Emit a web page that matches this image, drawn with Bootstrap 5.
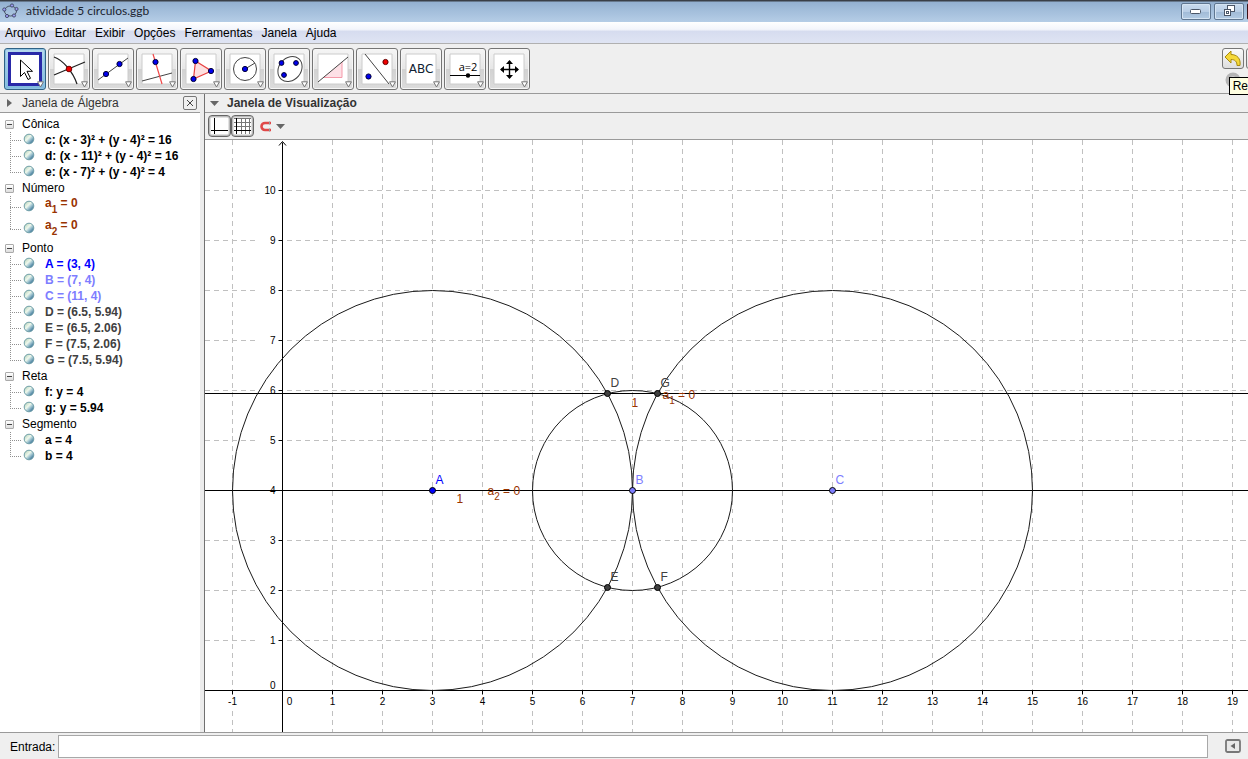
<!DOCTYPE html>
<html lang="pt-BR">
<head>
<meta charset="utf-8">
<meta name="viewport" content="width=device-width, initial-scale=1">
<title>atividade 5 circulos.ggb</title>
<link rel="stylesheet" href="https://cdn.jsdelivr.net/npm/bootstrap@5.3.0/dist/css/bootstrap.min.css">
<style>
  body { font: 12px/16px "Liberation Sans", Arial, sans-serif; color: #000; background: #efefef; }
  button { font: inherit; padding: 0; }
  .titlebar { height: 22px; padding: 0 0 0 2px; gap: 6px; background: linear-gradient(#3a3f47 0 1px, #93b0d0 2px, #a3bedb 50%, #b5cde6); }
  .title-text { font: 12px/20px Lato, "Open Sans", sans-serif; color: #1c2430; }
  .win-buttons { width: 67px; gap: 3px; }
  .win-btn { flex: 0 0 30px; height: 17px; border: 1px solid #5f7690; border-radius: 2px; background: linear-gradient(#c9dbee, #b9cee6 50%, #a0bad6 51%, #b3cbe4); box-shadow: inset 0 0 0 1px #d5e4f3; }
  .win-close { background: #6b2630; border-color: #3c1118; box-shadow: none; }
  .menus { height: 22px; gap: 9px; padding: 0 5px; background: linear-gradient(#fff, #f3f5fb 35%, #d6dcef 45%, #dfe4f3); border-bottom: 1px solid #b0b0b0; }
  .menus a { color: #000; text-decoration: none; line-height: 22px; }
  .tools { height: 50px; padding: 4px 0 0 4px; gap: 2px; border-bottom: 1px solid #9a9a9a; }
  .tool { flex: 0 0 42px; height: 42px; border: 1px solid #757575; border-radius: 3px; background: linear-gradient(#f5f5f5, #e6e6e6 50%, #d2d2d2 51%, #dcdcdc); box-shadow: inset 0 0 0 1px #f6f6f6; }
  .tool svg { display: block; margin: 0 auto; }
  .tool.active { border-color: #2f6286; background: linear-gradient(#b6d9ee, #7fb9de); box-shadow: inset 0 0 0 1px #8fc3e2; }
  .history { width: 26px; }
  .step-row { gap: 2px; }
  .step { flex: 0 0 22px; height: 21px; border: 1px solid #777; border-radius: 3px; background: linear-gradient(#fafafa, #dedede); }
  .step svg, .redo svg { display: block; }
  .redo { border: 0; background: none; margin: 3px 0 0 3px; }
  .tip { right: 0; top: 33px; height: 18px; padding: 0 0 0 3px; background: #ffffe1; border: 1px solid #000; border-right: 0; white-space: nowrap; font-size: 12px; }
  .algebra { flex: 0 0 205px; background: #fff; border-right: 1px solid #707070; }
  .algebra-main { background: #fff; }
  .splitter { width: 4px; background: #ececec; }
  .panel-head { height: 19px; border-bottom: 1px solid #9a9a9a; background: #efefef; color: #333; line-height: 18px; }
  .fold { border: 0; background: none; line-height: 0; width: 22px; padding-right: 3px; text-align: center; }
  .closer { width: 14px; height: 14px; border: 1px solid #777; border-radius: 2px; background: #f0f0f0; line-height: 0; margin-right: 3px; }
  .tree { padding-top: 3px; }
  .tree ul { list-style: none; margin: 0; padding: 0; }
  .branch { height: 16px; padding-left: 5px; gap: 8px; }
  .twist { width: 9px; height: 9px; border: 1px solid #aaa; border-radius: 1px; background: linear-gradient(#fff, #ddd); line-height: 0; }
  .leaf { height: 16px; padding-left: 23px; gap: 10px; font-weight: bold; white-space: nowrap;
    background: repeating-linear-gradient(#909090 0 1px, transparent 1px 2px) 10px 0 / 1px 100% no-repeat, repeating-linear-gradient(90deg, #909090 0 1px, transparent 1px 2px) 10px 50% / 11px 1px no-repeat; }
  .leaf svg { margin-bottom: 2px; }
  .leaf:last-child { background-size: 1px 50%, 11px 1px; }
  .leaf.tall { height: 22px; }
  .leaf.tall span { margin-top: -8px; }
  .leaf sub { font-size: 10px; bottom: -6px; }
  .rust { color: #993300; } .free { color: #0000ff; } .onpath { color: #7d7dff; } .derived { color: #404040; }
  .view-tools { height: 27px; padding: 0 3px; border-bottom: 1px solid #9a9a9a; }
  .toggle { width: 23px; height: 22px; border: 1px solid #666; border-radius: 4px; background: #e2e2e2; box-shadow: inset 0 0 0 1px #bbb; line-height: 0; }
  .magnet { border: 0; background: none; line-height: 0; margin-left: 5px; }
  .board { background: #fff; min-height: 0; overflow: hidden; }
  .board svg { display: block; }
  .board text { font: 12px "Liberation Sans", Arial, sans-serif; }
  .board .num text { font-size: 10px; }
  .board .subscript { font-size: 10px; }
  .entry { height: 27px; padding: 2px 7px 1px 10px; gap: 3px; border-top: 1px solid #9a9a9a; }
  .entry input { height: 23px; border: 1px solid #a8a8a8; background: #fff; padding: 0 4px; margin-right: 14px; min-width: 0; }
  .entry button { border: 0; background: none; line-height: 0; }
</style>
</head>
<body class="d-flex flex-column vh-100 overflow-hidden">
<svg width="0" height="0" class="position-absolute" aria-hidden="true">
  <defs>
    <linearGradient id="ball" x1="0.1" y1="0.1" x2="0.9" y2="0.9"><stop offset="0" stop-color="#b4d2bc"/><stop offset="0.4" stop-color="#f0f8ec"/><stop offset="0.6" stop-color="#a9cbd4"/><stop offset="1" stop-color="#27648e"/></linearGradient>
    <symbol id="marble" viewBox="0 0 12 12"><circle cx="6" cy="6" r="4.800" fill="url(#ball)" stroke="#6f9fa8"/></symbol>
    <symbol id="minus" viewBox="0 0 7 7"><path d="M1 3.500h5" stroke="#444"/></symbol>
    <symbol id="more" viewBox="0 0 7 7"><path d="M.6.8h5.8L3.5 6z" fill="#fff" stroke="#777"/></symbol>
  </defs>
</svg>

<header class="titlebar d-flex align-items-center flex-shrink-0">
  <svg width="18" height="18" viewBox="0 0 18 18"><ellipse cx="8.500" cy="9" rx="6" ry="5" fill="none" stroke="#4b5363"/><g fill="#9c9cf0" stroke="#333a55" stroke-width=".8"><circle cx="10" cy="3.500" r="1.600"/><circle cx="14.500" cy="7" r="1.600"/><circle cx="12" cy="13.500" r="1.600"/><circle cx="5" cy="14" r="1.600"/><circle cx="2.300" cy="7.500" r="1.600"/></g></svg>
  <span class="title-text flex-grow-1">atividade 5 circulos.ggb</span>
  <div class="win-buttons d-flex overflow-hidden">
    <button class="win-btn" aria-label="Minimizar"><svg class="d-block mx-auto" width="12" height="7"><rect x=".5" y="1.500" width="10" height="4" rx="1" fill="#fff" stroke="#4b5668"/></svg></button>
    <button class="win-btn" aria-label="Restaurar"><svg class="d-block mx-auto" width="13" height="12"><g fill="#fff" stroke="#4b5668"><rect x="4.500" y=".5" width="7" height="6"/><rect x="1.500" y="4.500" width="6" height="6"/><rect x="3.500" y="6.500" width="2" height="2"/></g></svg></button>
    <button class="win-btn win-close" aria-label="Fechar"></button>
  </div>
</header>

<nav class="menus d-flex flex-shrink-0">
  <a href="#">Arquivo</a><a href="#">Editar</a><a href="#">Exibir</a><a href="#">Opções</a><a href="#">Ferramentas</a><a href="#">Janela</a><a href="#">Ajuda</a>
</nav>

<div class="tools d-flex flex-shrink-0 position-relative">
  <button class="tool active" aria-label="Mover"><svg width="40" height="40"><rect x="4.500" y="4.500" width="31" height="31" fill="#fff" stroke="#2929a8" stroke-width="3"/><path d="M15.500 11v16.500l4-4 3.500 7 2.500-1.200-3.500-7h5.500z" fill="#fff" stroke="#000"/><use href="#more" x="32" y="32" width="7" height="7"/></svg></button>
  <button class="tool" aria-label="Ponto"><svg width="40" height="40"><path d="M5 5h30v30H5z" fill="#fff" stroke="#ccc"/><path d="M5 8c9 3 19 15 23 27M5 26l31-13" fill="none" stroke="#222" stroke-width="1.300"/><circle cx="20" cy="20" r="2.800" fill="#e00" stroke="#700"/><use href="#more" x="32" y="32" width="7" height="7"/></svg></button>
  <button class="tool" aria-label="Reta"><svg width="40" height="40"><path d="M5 5h30v30H5z" fill="#fff" stroke="#ccc"/><path d="M5 31L35 9" stroke="#444"/><g fill="#00e" stroke="#003"><circle cx="13" cy="25" r="2.600"/><circle cx="26.500" cy="15" r="2.600"/></g><use href="#more" x="32" y="32" width="7" height="7"/></svg></button>
  <button class="tool" aria-label="Reta perpendicular"><svg width="40" height="40"><path d="M5 5h30v30H5z" fill="#fff" stroke="#ccc"/><path d="M5 32l30-8" stroke="#444"/><path d="M16 5l9 30" stroke="#f04848" stroke-width="1.200"/><circle cx="18.500" cy="13" r="2.600" fill="#00e" stroke="#003"/><use href="#more" x="32" y="32" width="7" height="7"/></svg></button>
  <button class="tool" aria-label="Polígono"><svg width="40" height="40"><path d="M5 5h30v30H5z" fill="#fff" stroke="#ccc"/><path d="M14.500 12l16 10-18 8z" fill="#fde0e0" stroke="#e84040" stroke-width="1.200"/><g fill="#00e" stroke="#003"><circle cx="14.500" cy="12" r="2.600"/><circle cx="30" cy="22" r="2.600"/><circle cx="12.500" cy="30" r="2.600"/></g><use href="#more" x="32" y="32" width="7" height="7"/></svg></button>
  <button class="tool" aria-label="Círculo"><svg width="40" height="40"><path d="M5 5h30v30H5z" fill="#fff" stroke="#ccc"/><circle cx="20" cy="20" r="11.500" fill="none" stroke="#444"/><path d="M20 20l10-6" stroke="#444"/><circle cx="20" cy="20" r="2.600" fill="#00e" stroke="#003"/><use href="#more" x="32" y="32" width="7" height="7"/></svg></button>
  <button class="tool" aria-label="Cônica"><svg width="40" height="40"><path d="M5 5h30v30H5z" fill="#fff" stroke="#ccc"/><ellipse cx="21" cy="20" rx="13.500" ry="11" transform="rotate(-50 21 20)" fill="none" stroke="#444"/><g fill="#00e" stroke="#003"><circle cx="12.500" cy="14" r="2.400"/><circle cx="27" cy="14" r="2.400"/><circle cx="15" cy="26" r="2.400"/></g><use href="#more" x="32" y="32" width="7" height="7"/></svg></button>
  <button class="tool" aria-label="Ângulo"><svg width="40" height="40"><path d="M5 5h30v30H5z" fill="#fff" stroke="#ccc"/><path d="M10 28.500h19V13" fill="#fde0e6" stroke="#f59aaa"/><path d="M5 33L35 8" stroke="#444"/><use href="#more" x="32" y="32" width="7" height="7"/></svg></button>
  <button class="tool" aria-label="Reflexão"><svg width="40" height="40"><path d="M5 5h30v30H5z" fill="#fff" stroke="#ccc"/><path d="M8 5l24 30" stroke="#444"/><circle cx="28.500" cy="13" r="2.600" fill="#e00" stroke="#600"/><circle cx="11.500" cy="27.500" r="2.600" fill="#00e" stroke="#003"/><use href="#more" x="32" y="32" width="7" height="7"/></svg></button>
  <button class="tool" aria-label="Texto"><svg width="40" height="40"><path d="M5 5h30v30H5z" fill="#fff" stroke="#ccc"/><text x="20" y="24" text-anchor="middle" font-family="DejaVu Sans, sans-serif" font-size="12" fill="#123">ABC</text><use href="#more" x="32" y="32" width="7" height="7"/></svg></button>
  <button class="tool" aria-label="Controle deslizante"><svg width="40" height="40"><path d="M5 5h30v30H5z" fill="#fff" stroke="#ccc"/><text x="23" y="22" text-anchor="middle" font-family="Open Sans, sans-serif" font-size="11" fill="#000">a=2</text><path d="M5 26.500h30" stroke="#000"/><circle cx="23" cy="26.500" r="2.200"/><use href="#more" x="32" y="32" width="7" height="7"/></svg></button>
  <button class="tool" aria-label="Mover janela"><svg width="40" height="40"><path d="M5 5h30v30H5z" fill="#fff" stroke="#ccc"/><path d="M12 20.500h17M20.500 12v17" stroke="#000" stroke-width="1.400"/><path d="M20.500 11l3.500 4h-7zM20.500 30l3.500-4h-7zM11 20.500l4-3.500v7zM30 20.500l-4-3.500v7z"/><use href="#more" x="32" y="32" width="7" height="7"/></svg></button>
  <div class="history ms-auto overflow-hidden">
    <div class="step-row d-flex">
      <button class="step" aria-label="Desfazer"><svg width="20" height="19"><path d="M2 8l6-6v3.500c6 0 10 4 9 11h-3c0-4-2-6-6-6V14z" fill="#f5d838" stroke="#a88a10"/></svg></button>
      <button class="step" aria-label="Opções do histórico"></button>
    </div>
    <button class="redo" aria-label="Refazer"><svg width="16" height="17"><circle cx="8" cy="8" r="7.500" fill="#b5b5b5"/><circle cx="8" cy="8" r="3.500" fill="#e8e8e8"/></svg></button>
  </div>
  <div class="tip position-absolute" role="tooltip">Re</div>
</div>

<main class="d-flex flex-grow-1" style="min-height:0">
  <aside class="algebra d-flex">
    <div class="algebra-main flex-grow-1">
      <div class="panel-head d-flex align-items-center">
        <button class="fold" aria-label="Expandir"><svg width="5" height="8"><path d="M0 0l5 4-5 4z" fill="#666"/></svg></button>
        <span class="flex-grow-1">Janela de Álgebra</span>
        <button class="closer" aria-label="Fechar"><svg width="8" height="8"><path d="M1 1l6 6M7 1L1 7" stroke="#444"/></svg></button>
      </div>
      <div class="tree">
        <div class="branch d-flex align-items-center"><button class="twist" aria-label="Recolher"><svg width="7" height="7"><use href="#minus"/></svg></button>Cônica</div>
        <ul>
          <li class="leaf d-flex align-items-center"><svg width="12" height="12"><use href="#marble"/></svg><span>c: (x - 3)² + (y - 4)² = 16</span></li>
          <li class="leaf d-flex align-items-center"><svg width="12" height="12"><use href="#marble"/></svg><span>d: (x - 11)² + (y - 4)² = 16</span></li>
          <li class="leaf d-flex align-items-center"><svg width="12" height="12"><use href="#marble"/></svg><span>e: (x - 7)² + (y - 4)² = 4</span></li>
        </ul>
        <div class="branch d-flex align-items-center"><button class="twist" aria-label="Recolher"><svg width="7" height="7"><use href="#minus"/></svg></button>Número</div>
        <ul>
          <li class="leaf tall rust d-flex align-items-center"><svg width="12" height="12"><use href="#marble"/></svg><span>a<sub>1</sub> = 0</span></li>
          <li class="leaf tall rust d-flex align-items-center"><svg width="12" height="12"><use href="#marble"/></svg><span>a<sub>2</sub> = 0</span></li>
        </ul>
        <div class="branch d-flex align-items-center"><button class="twist" aria-label="Recolher"><svg width="7" height="7"><use href="#minus"/></svg></button>Ponto</div>
        <ul>
          <li class="leaf free d-flex align-items-center"><svg width="12" height="12"><use href="#marble"/></svg><span>A = (3, 4)</span></li>
          <li class="leaf onpath d-flex align-items-center"><svg width="12" height="12"><use href="#marble"/></svg><span>B = (7, 4)</span></li>
          <li class="leaf onpath d-flex align-items-center"><svg width="12" height="12"><use href="#marble"/></svg><span>C = (11, 4)</span></li>
          <li class="leaf derived d-flex align-items-center"><svg width="12" height="12"><use href="#marble"/></svg><span>D = (6.5, 5.94)</span></li>
          <li class="leaf derived d-flex align-items-center"><svg width="12" height="12"><use href="#marble"/></svg><span>E = (6.5, 2.06)</span></li>
          <li class="leaf derived d-flex align-items-center"><svg width="12" height="12"><use href="#marble"/></svg><span>F = (7.5, 2.06)</span></li>
          <li class="leaf derived d-flex align-items-center"><svg width="12" height="12"><use href="#marble"/></svg><span>G = (7.5, 5.94)</span></li>
        </ul>
        <div class="branch d-flex align-items-center"><button class="twist" aria-label="Recolher"><svg width="7" height="7"><use href="#minus"/></svg></button>Reta</div>
        <ul>
          <li class="leaf d-flex align-items-center"><svg width="12" height="12"><use href="#marble"/></svg><span>f: y = 4</span></li>
          <li class="leaf d-flex align-items-center"><svg width="12" height="12"><use href="#marble"/></svg><span>g: y = 5.94</span></li>
        </ul>
        <div class="branch d-flex align-items-center"><button class="twist" aria-label="Recolher"><svg width="7" height="7"><use href="#minus"/></svg></button>Segmento</div>
        <ul>
          <li class="leaf d-flex align-items-center"><svg width="12" height="12"><use href="#marble"/></svg><span>a = 4</span></li>
          <li class="leaf d-flex align-items-center"><svg width="12" height="12"><use href="#marble"/></svg><span>b = 4</span></li>
        </ul>
      </div>
    </div>
    <div class="splitter"></div>
  </aside>

  <section class="d-flex flex-column flex-grow-1" style="min-width:0">
    <div class="panel-head d-flex align-items-center fw-bold">
      <button class="fold" aria-label="Recolher"><svg width="9" height="5"><path d="M0 0h9L4.500 5z" fill="#666"/></svg></button>
      <span>Janela de Visualização</span>
    </div>
    <div class="view-tools d-flex align-items-center flex-shrink-0">
      <button class="toggle" aria-label="Eixos"><svg width="17" height="16"><path d="M0 0h17v16H0z" fill="#fff"/><path d="M3.500 0v16M0 12.500h17" stroke="#000"/></svg></button>
      <button class="toggle" aria-label="Malha"><svg width="17" height="16"><path d="M0 0h17v16H0z" fill="#fff"/><path d="M7.500 0v16M11.500 0v16M15.500 0v16M0 8.500h17M0 4.500h17M0 .5h17" stroke="#777"/><path d="M2.500 0v16M0 12.500h17" stroke="#000"/></svg></button>
      <button class="magnet d-flex align-items-center gap-1" aria-label="Captura de pontos"><svg width="13" height="11"><path d="M12 2H6a3.500 3.500 0 0 0 0 7h6" fill="none" stroke="#e04848" stroke-width="2.600"/><path d="M10.500 .5v3M10.500 7.500v3" stroke="#999"/></svg><svg width="9" height="5"><path d="M0 0h9L4.500 5z" fill="#666"/></svg></button>
    </div>
    <div class="board flex-grow-1">
      <svg id="plot" width="100%" height="100%" role="img" aria-label="Janela de Visualização">
        <g transform="translate(77.500 550.500)">
          <g id="grid" stroke="#c0c0c0" stroke-dasharray="5 4" shape-rendering="crispEdges"></g>
          <g id="ticks" class="num"></g>
          <path d="M-78 0H3000M0 200V-548M-3.500-545L0-549l3.500 4" fill="none" stroke="#000"/>
          <path d="M-78-200H3000M-78-297H3000" stroke="#000"/>
          <g fill="none" stroke="#1a1a1a"><circle cx="150" cy="-200" r="200"/><circle cx="550" cy="-200" r="200"/><circle cx="350" cy="-200" r="100"/></g>
          <g stroke="#000">
            <circle cx="150" cy="-200" r="3" fill="#00f"/><circle cx="350" cy="-200" r="3" fill="#7d7dff"/><circle cx="550" cy="-200" r="3" fill="#7d7dff"/>
            <g fill="#404040"><circle cx="325" cy="-297" r="3"/><circle cx="375" cy="-297" r="3"/><circle cx="325" cy="-103" r="3"/><circle cx="375" cy="-103" r="3"/></g>
          </g>
          <g fill="#404040"><text x="328" y="-304">D</text><text x="378" y="-304">G</text><text x="328" y="-110">E</text><text x="378" y="-110">F</text></g>
          <text x="153" y="-207" fill="#00f">A</text>
          <g fill="#7d7dff"><text x="353" y="-207">B</text><text x="553" y="-207">C</text></g>
          <g fill="#993300"><text x="174" y="-188">1</text><text x="349" y="-284">1</text>
            <text x="205" y="-196">a<tspan class="subscript" dy="5">2</tspan><tspan dy="-5"> = 0</tspan></text>
            <text x="380" y="-292">a<tspan class="subscript" dy="5">1</tspan><tspan dy="-5"> = 0</tspan></text></g>
        </g>
      </svg>
    </div>
  </section>
</main>

<footer class="entry d-flex align-items-center flex-shrink-0">
  <label for="entrada">Entrada:</label>
  <input id="entrada" type="text" class="flex-grow-1">
  <button aria-label="Ajuda"><svg width="16" height="15"><rect x="1" y="1" width="14" height="12" rx="1.500" fill="#e8e8e8" stroke="#777" stroke-width="1.800"/><path d="M10 4v6L5.500 7z" fill="#666"/></svg></button>
</footer>

<script src="https://cdn.jsdelivr.net/npm/bootstrap@5.3.0/dist/js/bootstrap.bundle.min.js"></script>
<script>
  // Grid lines, axis ticks and numbers: one unit is 50 px, the origin is (0, 0).
  const UNIT = 50;
  function drawAxes() {
    const last = Math.floor((document.getElementById('plot').clientWidth - 86) / UNIT);
    let grid = '', ticks = '';
    for (let n = -1; n <= last; n++) {
      const x = n * UNIT;
      if (n !== 0) {
        grid += `<path d="M${x}-551V6M${x} 20V400"/>`;
        ticks += `<path d="M${x} 0v4" stroke="#000"/>`;
      }
      ticks += `<text x="${n === 0 ? 7 : x}" y="14" text-anchor="middle">${n}</text>`;
    }
    for (let n = 0; n <= 10; n++) {
      const y = -n * UNIT;
      if (n !== 0) {
        grid += `<path d="M-78 ${y}H-25M4 ${y}H3000"/>`;
        ticks += `<path d="M-4 ${y}h4" stroke="#000"/>`;
      }
      ticks += `<text x="-7" y="${n === 0 ? -2 : y + 3}" text-anchor="end">${n}</text>`;
    }
    document.getElementById('grid').innerHTML = grid;
    document.getElementById('ticks').innerHTML = ticks;
  }
  drawAxes();
  window.addEventListener('resize', drawAxes);
</script>
</body>
</html>
